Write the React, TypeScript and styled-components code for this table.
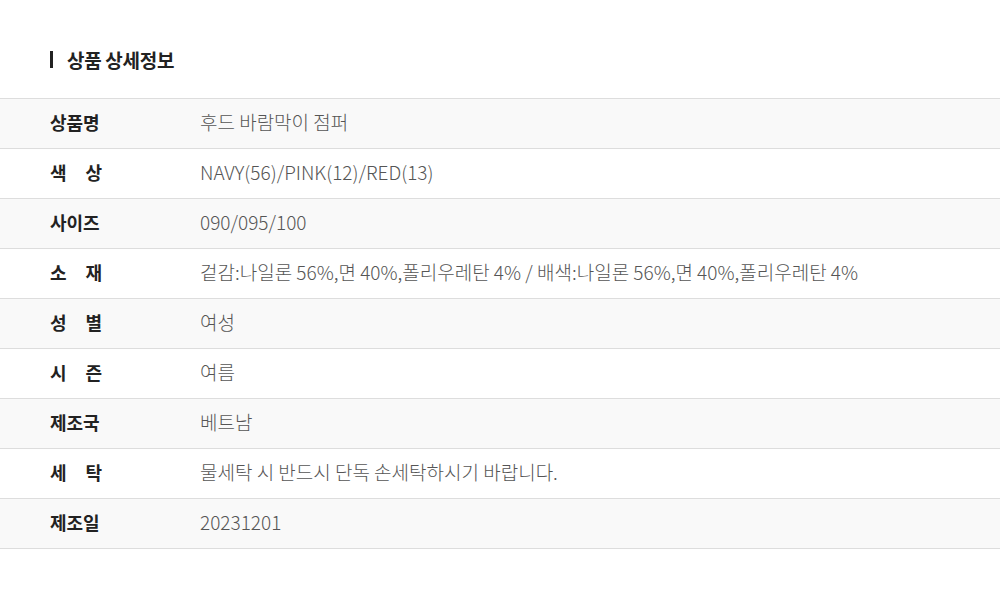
import styled, { createGlobalStyle } from "styled-components";

const GlobalStyle = createGlobalStyle`
  html, body {
    margin: 0;
    padding: 0;
    background: #fff;
  }

  body {
    font-family: "Noto Sans CJK KR", "Noto Sans", sans-serif;
    color: #222;
  }
`;

const rows = [
  { label: ["상품명"], value: "후드 바람막이 점퍼" },
  { label: ["색", "상"], value: "NAVY(56)/PINK(12)/RED(13)" },
  { label: ["사이즈"], value: "090/095/100" },
  { label: ["소", "재"], value: "겉감:나일론 56%,면 40%,폴리우레탄 4% / 배색:나일론 56%,면 40%,폴리우레탄 4%" },
  { label: ["성", "별"], value: "여성" },
  { label: ["시", "즌"], value: "여름" },
  { label: ["제조국"], value: "베트남" },
  { label: ["세", "탁"], value: "물세탁 시 반드시 단독 손세탁하시기 바랍니다." },
  { label: ["제조일"], value: "20231201" },
];

const ProductInfo = () => {
  return (
    <StyledSection>
      <StyledTitle>상품 상세정보</StyledTitle>
      <StyledTable>
        {rows.map((row, i) => (
          <StyledRow key={i} $shaded={i % 2 === 0}>
            <StyledLabel>
              {row.label.map((part) => (
                <span key={part}>{part}</span>
              ))}
            </StyledLabel>
            <StyledValue>{row.value}</StyledValue>
          </StyledRow>
        ))}
      </StyledTable>
    </StyledSection>
  );
};

const StyledSection = styled.section`
  padding-top: 46px;
  width: 1000px;
`;

const StyledTitle = styled.h2`
  display: flex;
  align-items: center;
  gap: 14px;
  margin: 0 0 26px 50px;
  height: 26px;
  font-size: 19px;
  font-weight: 700;
  color: #222;
  letter-spacing: -0.3px;

  &::before {
    content: "";
    width: 3px;
    height: 17px;
    background: #222;
  }
`;

const StyledTable = styled.div`
  border-top: 1px solid #ddd;
`;

const StyledRow = styled.div<{ $shaded: boolean }>`
  display: grid;
  grid-template-columns: 150px 1fr;
  align-items: center;
  height: 49px;
  padding-left: 50px;
  border-bottom: 1px solid #ddd;
  background: ${(p) => (p.$shaded ? "#f9f9f9" : "#fff")};
  line-height: 1.2;
`;

const StyledLabel = styled.div`
  display: flex;
  justify-content: space-between;
  width: 52px;
  font-size: 18px;
  font-weight: 700;
  color: #222;
  margin-top: -2px;
`;

const StyledValue = styled.div`
  font-size: 19px;
  font-weight: 300;
  color: #555;
  margin-top: -2px;
`;

const App = () => (
  <>
    <GlobalStyle />
    <ProductInfo />
  </>
);

export default App;
